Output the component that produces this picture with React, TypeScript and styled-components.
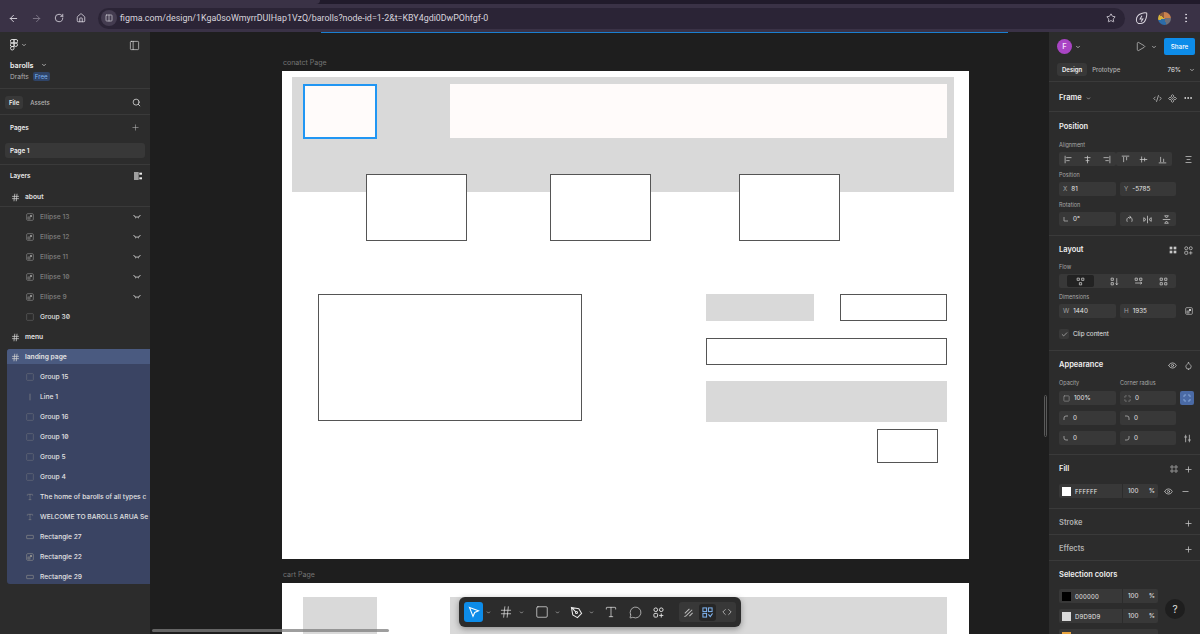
import React from 'react'
import styled, { createGlobalStyle, css } from 'styled-components'
import {
    ArrowLeft, ArrowRight, RotateCw, House, Star, Plus, Search, Hash, Type, Minus, Eye,
    Square, MessageCircle, Code, ChevronDown, Ellipsis, Play, Check, EllipsisVertical, PanelLeft,
    Droplet, Maximize, Columns2, CodeXml,
} from 'lucide-react'

const GlobalStyle = createGlobalStyle`
    html, body {
        margin: 0;
        padding: 0;
        height: 100%;
        overflow: hidden;
        background: #1e1e1e;
    }
    * {
        box-sizing: border-box;
    }
`

const Page = styled.div`
    width: 1200px;
    height: 634px;
    display: flex;
    flex-direction: column;
    overflow: hidden;
    font-family: Inter, "Liberation Sans", sans-serif;
    font-size: 6.3px;
    color: #e6e6e6;
`

/* browser chrome */
const TabStrip = styled.div`
    height: 4px;
    background: #211b2b;
`
const ActiveTab = styled.div`
    width: 320px;
    height: 4px;
    background: #3a3246;
    border-radius: 0 0 4px 0;
`
const Toolbar = styled.div`
    height: 28px;
    display: flex;
    align-items: center;
    background: #3a3246;
    color: #d9d5de;
    padding-left: 8px;
`
const NavGroup = styled.div`
    width: 90px;
    display: flex;
    align-items: center;
    gap: 12px;
`
const UrlPill = styled.div`
    width: 1027px;
    height: 21px;
    display: flex;
    align-items: center;
    padding: 0 9px 0 3px;
    border-radius: 11px;
    background: #2b2436;
    font-family: Roboto, "Liberation Sans", sans-serif;
    font-size: 8.9px;
    color: #d8d4dd;
`
const SiteChip = styled.div`
    width: 16px;
    height: 16px;
    margin-right: 3px;
    display: flex;
    align-items: center;
    justify-content: center;
    border-radius: 50%;
    background: #443c50;
`
const UrlText = styled.span`
    flex: 1;
    margin-top: -1px;
`
const ChromeRight = styled.div`
    flex: 1;
    display: flex;
    align-items: center;
    justify-content: space-between;
    padding: 0 8px 0 10px;
`
const ProfileDot = styled.div`
    width: 13px;
    height: 13px;
    border-radius: 50%;
    background: conic-gradient(#c9814e 0 25%, #6f7078 25% 45%, #2c6ca8 45% 70%, #d6b23c 70% 85%, #8a5a3c 85%);
`

/* editor layout */
const Editor = styled.div`
    flex: 1;
    display: flex;
    min-height: 0;
`
const LeftPanel = styled.aside`
    width: 151px;
    flex-shrink: 0;
    background: #2c2c2c;
    border-right: 1px solid #1e1e1e;
    overflow: hidden;
`
const RightPanel = styled.aside`
    width: 151px;
    flex-shrink: 0;
    background: #2c2c2c;
    overflow: hidden;
`
const Canvas = styled.main`
    position: relative;
    flex: 1;
    background: #1e1e1e;
    overflow: hidden;
`

/* left panel */
const FileHead = styled.div`
    height: 57px;
    padding: 7px 10px 0 10px;
    border-bottom: 1px solid #3a3a3a;
`
const Between = styled.div`
    display: flex;
    align-items: center;
    justify-content: space-between;
`
const Inline = styled.div<{ $gap?: number }>`
    display: flex;
    align-items: center;
    gap: ${(p) => p.$gap ?? 2}px;
`
const FileName = styled.div`
    margin-top: 8px;
    display: flex;
    align-items: center;
    gap: 8px;
    height: 12px;
    font-size: 7.2px;
    font-weight: 600;
    color: #f0f0f0;
`
const Drafts = styled.div`
    margin-top: 1px;
    display: flex;
    align-items: center;
    gap: 4px;
    font-size: 6.6px;
    color: #b0b0b0;
`
const FreeBadge = styled.span`
    padding: 1px 2px;
    border-radius: 2px;
    background: #2f4468;
    color: #7fb4f0;
    line-height: 7px;
    font-size: 6.2px;
`
const TabsRow = styled.div`
    height: 26px;
    padding: 1px 9px 0 5px;
    display: flex;
    align-items: center;
    justify-content: space-between;
    border-bottom: 1px solid #3a3a3a;
`
const LeftTab = styled.span<{ $active?: boolean }>`
    padding: 3px 4px;
    margin-right: 3px;
    border-radius: 3px;
    font-size: 6px;
    font-weight: ${(p) => (p.$active ? 600 : 500)};
    color: ${(p) => (p.$active ? '#f0f0f0' : '#b4b4b4')};
    background: ${(p) => (p.$active ? '#383838' : 'transparent')};
`
const PagesBlock = styled.div`
    height: 50px;
    padding: 7px 5px 0;
    border-bottom: 1px solid #3a3a3a;
`
const BlockHead = styled.div`
    height: 11px;
    padding: 0 5px;
    display: flex;
    align-items: center;
    justify-content: space-between;
    font-weight: 600;
    color: #ededed;
`
const PageRow = styled.div`
    height: 15px;
    margin-top: 10px;
    padding: 0 5px;
    display: flex;
    align-items: center;
    border-radius: 3px;
    background: #383838;
    font-weight: 600;
    color: #f0f0f0;
`
const LayersHead = styled(BlockHead)`
    height: 21px;
    padding: 1px 8px 0 10px;
`
const LayerRow = styled.div<{ $indent: number; $dim?: boolean; $frame?: boolean; $h?: number; $top?: number }>`
    height: ${(p) => p.$h ?? 20}px;
    display: flex;
    align-items: center;
    padding-left: ${(p) => p.$indent}px;
    padding-top: ${(p) => p.$top ?? 0}px;
    white-space: nowrap;
    overflow: hidden;
    font-size: 6.7px;
    font-feature-settings: "zero";
    font-weight: ${(p) => (p.$frame ? 600 : 500)};
    color: ${(p) => (p.$dim ? '#7d7d7d' : '#e2e2e2')};
`
const LayerName = styled.span`
    flex-shrink: 0;
`
const LayerIcon = styled.span<{ $w: number }>`
    width: ${(p) => p.$w}px;
    flex-shrink: 0;
    display: flex;
    align-items: center;
    color: #8c8c8c;
`
const LayerTail = styled.span`
    margin-left: auto;
    margin-right: 9px;
    display: flex;
    color: #d8d8d8;
`
const AboutRule = styled.div`
    height: 1px;
    background: #3a3a3a;
`
const SelectedBlock = styled.div`
    height: 235px;
    margin: 2px 0 0 7px;
    overflow: hidden;
    border-radius: 3px 0 0 3px;
    background: #3a4463;
`
const SelectedHead = styled.div`
    background: #4a5a80;
`
const GapRow = styled.div`
    height: 3px;
`

/* right panel */
const Section = styled.section<{ $h: number; $pad?: number }>`
    height: ${(p) => p.$h}px;
    padding: ${(p) => p.$pad ?? 7}px 7px 0 10px;
    border-bottom: 1px solid #3a3a3a;
`
const HeaderSection = styled(Section)`
    padding-left: 8px;
    padding-right: 5px;
`
const CenterSection = styled(Section)`
    display: flex;
    align-items: center;
    justify-content: space-between;
    padding-top: 3px;
`
const Title = styled.div<{ $muted?: boolean }>`
    height: 12px;
    line-height: 12px;
    font-size: 7.5px;
    font-weight: 600;
    color: ${(p) => (p.$muted ? '#b0b0b0' : '#f0f0f0')};
`
const Mini = styled.div<{ $top?: number }>`
    height: 9px;
    line-height: 9px;
    margin: ${(p) => (p.$top ?? 4) + 1}px 0 2px;
    font-size: 5.5px;
    color: #a8a8a8;
`
const Grid2 = styled.div`
    display: grid;
    grid-template-columns: 57px 56px;
    column-gap: 4px;
    row-gap: 6px;
`
const CornerGrid = styled.div`
    display: grid;
    grid-template-columns: 57px 56px 14px;
    column-gap: 4px;
    row-gap: 6px;
    align-items: center;
`
const LabelGrid = styled(Grid2)`
    margin: 8px 0 3px;
    & > ${Mini} {
        margin: 0;
    }
`
const Field = styled.div`
    height: 14px;
    padding: 0 4px;
    display: flex;
    align-items: center;
    gap: 4px;
    border-radius: 2px;
    background: #383838;
    color: #e6e6e6;
`
const Axis = styled.span`
    color: #a0a0a0;
`
const Seg = styled.div<{ $w: number }>`
    width: ${(p) => p.$w}px;
    height: 14px;
    display: flex;
    align-items: center;
    justify-content: space-around;
    border-radius: 2px;
    background: #383838;
    color: #cfcfcf;
`
const SegFill = styled.span`
    width: 27px;
    height: 12px;
    display: flex;
    align-items: center;
    justify-content: center;
    border-radius: 2px;
    background: #222;
`
const RowLine = styled.div<{ $top?: number }>`
    display: flex;
    align-items: center;
    justify-content: space-between;
    margin-top: ${(p) => p.$top ?? 0}px;
`
const SideIcon = styled.span`
    display: flex;
    margin-left: auto;
    color: #c8c8c8;
`
const IconRow = styled(Inline)`
    color: #c8c8c8;
`
const Avatar = styled.div`
    width: 15px;
    height: 15px;
    display: flex;
    align-items: center;
    justify-content: center;
    border-radius: 50%;
    background: #a945c4;
    color: #f3dff8;
    font-size: 7.5px;
    font-weight: 600;
`
const ShareButton = styled.div`
    width: 31px;
    height: 17px;
    margin-left: 2px;
    display: flex;
    align-items: center;
    justify-content: center;
    border-radius: 2px;
    background: #0d8ce9;
    color: #fff;
    font-weight: 500;
`
const DesignTab = styled.span<{ $active?: boolean }>`
    padding: 3px 5px;
    margin-right: 0;
    border-radius: 3px;
    font-size: 6px;
    font-weight: ${(p) => (p.$active ? 600 : 500)};
    color: ${(p) => (p.$active ? '#f0f0f0' : '#b0b0b0')};
    background: ${(p) => (p.$active ? '#383838' : 'transparent')};
`
const Check14 = styled.span`
    width: 10px;
    height: 10px;
    display: flex;
    align-items: center;
    justify-content: center;
    border-radius: 2px;
    background: #383838;
    color: #d8d8d8;
`
const BlueToggle = styled.span`
    width: 14px;
    height: 14px;
    display: flex;
    align-items: center;
    justify-content: center;
    border-radius: 2px;
    background: #4a6aa5;
    color: #a6c8f5;
`
const GridIcon = styled.span`
    display: flex;
    justify-content: center;
    color: #c8c8c8;
`
const FillRow = styled.div<{ $top: number }>`
    display: flex;
    align-items: center;
    margin-top: ${(p) => p.$top}px;
`
const Swatch = styled.span<{ $c: string }>`
    width: 9px;
    height: 9px;
    flex-shrink: 0;
    background: ${(p) => p.$c};
`
const ColorField = styled(Field)`
    width: 99px;
    padding: 0 3px;
`
const Hex = styled.span`
    flex: 1;
    font-size: 6px;
    letter-spacing: 0.2px;
`
const Percent = styled.span`
    width: 33px;
    height: 14px;
    display: flex;
    align-items: center;
    justify-content: space-between;
    padding-left: 5px;
    border-left: 1px solid #2c2c2c;
`
const HelpBubble = styled.div`
    position: absolute;
    right: 15px;
    bottom: 15px;
    width: 20px;
    height: 20px;
    display: flex;
    align-items: center;
    justify-content: center;
    border-radius: 50%;
    background: #1e1e1e;
    font-size: 10px;
    color: #e0e0e0;
`

/* canvas nodes */
const nodeBox = css<{ $x: number; $y: number; $w: number; $h: number }>`
    position: absolute;
    left: ${(p) => p.$x - 151}px;
    top: ${(p) => p.$y - 32}px;
    width: ${(p) => p.$w}px;
    height: ${(p) => p.$h}px;
`
const Frame = styled.div<{ $x: number; $y: number; $w: number; $h: number }>`
    ${nodeBox}
    background: #fff;
`
const Shape = styled.div<{ $x: number; $y: number; $w: number; $h: number; $kind: 'gray' | 'line' | 'cream' | 'picked' }>`
    ${nodeBox}
    ${(p) => p.$kind === 'gray' && css`background: #d9d9d9;`}
    ${(p) => p.$kind === 'line' && css`background: #fff; border: 1px solid #555;`}
    ${(p) => p.$kind === 'cream' && css`background: #fffbfa;`}
    ${(p) => p.$kind === 'picked' && css`background: #fffbfa; border: 2px solid #2196f3;`}
`
const FrameLabel = styled.span<{ $x: number; $y: number }>`
    position: absolute;
    left: ${(p) => p.$x - 151}px;
    top: ${(p) => p.$y - 32}px;
    color: #757575;
    font-size: 7px;
`
const TopGuide = styled.div`
    position: absolute;
    left: 170px;
    top: 0;
    width: 687px;
    height: 1px;
    background: #1a7fd0;
`
const ScrollH = styled.div`
    position: absolute;
    left: 1px;
    bottom: 2px;
    width: 237px;
    height: 3px;
    border-radius: 2px;
    background: rgba(125, 125, 125, 0.75);
`
const ScrollV = styled.div`
    position: absolute;
    right: 2px;
    top: 363px;
    width: 3px;
    height: 42px;
    border-radius: 2px;
    border: 1px solid #5a5a5a;
    background: #222;
`
const FloatingBar = styled.div`
    position: absolute;
    left: 308px;
    top: 565px;
    width: 282px;
    height: 30px;
    padding: 0 5px;
    display: flex;
    align-items: center;
    border-radius: 6px;
    background: #2c2c2c;
    box-shadow: 0 2px 6px rgba(0, 0, 0, 0.35);
    color: #eaeaea;
`
const ActiveTool = styled.span`
    width: 19px;
    height: 20px;
    display: flex;
    align-items: center;
    justify-content: center;
    border-radius: 3px;
    background: #0d8ce9;
    color: #fff;
`
const Tool = styled.span<{ $w: number }>`
    width: ${(p) => p.$w}px;
    flex-shrink: 0;
    display: flex;
    align-items: center;
    justify-content: center;
    gap: 6px;
`
const ModeGroup = styled.div`
    margin-left: auto;
    width: 57px;
    height: 20px;
    padding: 0 1px;
    display: flex;
    align-items: center;
    justify-content: space-between;
    border-radius: 3px;
    background: #383838;
    color: #bdbdbd;
`
const Mode = styled.span<{ $active?: boolean }>`
    width: 17px;
    height: 17px;
    display: flex;
    align-items: center;
    justify-content: center;
    border-radius: 3px;
    background: ${(p) => (p.$active ? '#262626' : 'transparent')};
    color: ${(p) => (p.$active ? '#7fb4f0' : '#bdbdbd')};
`

/* small drawings */
const Svg = ({ s = 9, children }: { s?: number; children: React.ReactNode }) => (
    <svg width={s} height={s} viewBox="0 0 12 12" fill="none" stroke="currentColor" strokeWidth="1">
        {children}
    </svg>
)
const Caret = ({ s = 6 }: { s?: number }) => <ChevronDown size={s} strokeWidth={2.5} />
const FigmaMark = () => (
    <svg width="8" height="12" viewBox="0 0 8 12" fill="none" stroke="#e8e8e8" strokeWidth="0.9">
        <path d="M4 .5H2a1.75 1.75 0 0 0 0 3.5h2zM4 .5h2a1.75 1.75 0 0 1 0 3.5H4zM4 4H2a1.75 1.75 0 0 0 0 3.5h2zM4 7.5H2A1.75 1.75 0 1 0 4 9.25zM4 5.75a1.75 1.75 0 1 0 3.5 0 1.75 1.75 0 1 0-3.5 0" />
    </svg>
)
const MaskIcon = () => (
    <Svg s={8}>
        <rect x="1" y="1" width="10" height="10" rx="1.5" />
        <rect x="6" y="3" width="3" height="3" fill="currentColor" stroke="none" />
        <rect x="3" y="6" width="3" height="3" />
    </Svg>
)
const GroupIcon = () => (
    <Svg s={8}>
        <rect x="1" y="1" width="10" height="10" rx="1" opacity="0.55" />
    </Svg>
)
const RectIcon = () => (
    <Svg s={8}>
        <rect x="1" y="3.5" width="10" height="5" rx="0.5" />
    </Svg>
)
const LineIcon = () => (
    <Svg s={8}>
        <path d="M6 1v10" />
    </Svg>
)
const LashIcon = () => (
    <Svg s={8}>
        <path d="M1 4c2.500 3 7.500 3 10 0M1 3l1.500 2M11 3L9.500 5M4.300 5.500L3.800 8M7.700 5.500L8.200 8" />
    </Svg>
)
const LayersToggle = () => (
    <svg width="8" height="8" viewBox="0 0 12 12" fill="currentColor">
        <rect x="0" y="0" width="7" height="12" opacity="0.6" />
        <rect x="8" y="1" width="4" height="3" />
        <rect x="8" y="8" width="4" height="3" />
    </svg>
)
const ShapesIcon = ({ s = 9 }: { s?: number }) => (
    <Svg s={s}>
        <circle cx="3" cy="3" r="2" />
        <circle cx="9" cy="3" r="2" />
        <rect x="1" y="7" width="4" height="4" rx="1" />
        <path d="M9 7v4.500M6.800 9.200h4.500" />
    </Svg>
)
const FourDots = ({ s = 9 }: { s?: number }) => (
    <Svg s={s}>
        <circle cx="3" cy="3" r="1.800" />
        <circle cx="9" cy="3" r="1.800" />
        <circle cx="3" cy="9" r="1.800" />
        <circle cx="9" cy="9" r="1.800" />
    </Svg>
)
const ComponentIcon = () => (
    <Svg s={9}>
        <path d="M6 .8L8 2.800 6 4.800 4 2.800zM6 7.200L8 9.200 6 11.200 4 9.200zM2.800 4L4.800 6 2.800 8 .8 6zM9.200 4L11.200 6 9.200 8 7.200 6z" />
    </Svg>
)
const GripSquares = () => (
    <svg width="8" height="8" viewBox="0 0 12 12" fill="currentColor">
        <rect x="1" y="1" width="4" height="4" />
        <rect x="7" y="1" width="4" height="4" />
        <rect x="1" y="7" width="4" height="4" />
        <rect x="7" y="7" width="4" height="4" />
    </svg>
)
const PanelGlyph = ({ d }: { d: string }) => (
    <Svg s={9}>
        <path d={d} />
    </Svg>
)
const CornerGlyph = ({ d }: { d: string }) => (
    <svg width="6" height="6" viewBox="0 0 6 6" fill="none" stroke="#a0a0a0" strokeWidth="0.9">
        <path d={d} />
    </svg>
)
const ExtensionLeaf = () => (
    <svg width="13" height="13" viewBox="0 0 14 14" fill="none" stroke="#d9d5de" strokeWidth="1.1">
        <path d="M7 1.500c3-1 5.500-.5 5.500-.5s.5 2.500-.5 5.500C11 10 8.500 12.500 5.500 12.500A4 4 0 0 1 1.500 8.500C1.500 5 4 2.500 7 1.500z" />
        <path d="M7.500 4L5.500 7.500h3L6.500 10.500" />
    </svg>
)
const PenNib = () => (
    <svg width="13" height="13" viewBox="0 0 14 14" fill="none" stroke="currentColor" strokeWidth="1.1">
        <path d="M1.500 1.500l8 1.500 3 5-4.500 4.500-5-3zM1.500 1.500l5 5" />
        <circle cx="7" cy="7" r="1.100" />
    </svg>
)
const PointerTool = () => (
    <svg width="12" height="12" viewBox="0 0 12 12" fill="none" stroke="currentColor" strokeWidth="1.1">
        <path d="M1.500 1.500l9 3.200-3.800 1.800-1.700 3.900z" />
    </svg>
)
const DrawTool = () => (
    <svg width="11" height="11" viewBox="0 0 12 12" fill="none" stroke="currentColor" strokeWidth="1.1">
        <path d="M2 7l5-5M3.500 9.500L10 3M7 10l3.500-3.500M1.500 10.500l2-1" />
    </svg>
)
const DevTool = () => (
    <svg width="11" height="11" viewBox="0 0 12 12" fill="none" stroke="currentColor" strokeWidth="1.1">
        <rect x="1" y="1" width="4" height="4" />
        <rect x="7" y="1" width="4" height="4" />
        <rect x="1" y="7" width="4" height="4" />
        <path d="M7 8l2 2.500L11.500 7" />
    </svg>
)

const alignGlyphs = [
    'M1.500 1v10M3 3.500h7M3 7.500h4.500',
    'M6 1v10M2 3.500h8M3.500 7.500h5',
    'M10.500 1v10M2 3.500h7M4.500 7.500h4.500',
]
const valignGlyphs = [
    'M1 1.500h10M3.500 2.500v7M7.500 2.500v4.500',
    'M1 6h10M3.500 2v8M7.500 3.500v5',
    'M1 10.500h10M3.500 2.500v7M7.500 5v4.500',
]
const flowGlyphs = [
    'M1.500 1.500h3v3h-3zM7.500 1.500h3v3h-3zM4.500 7.500h3v3h-3z',
    'M1.500 1.500h3v3h-3zM1.500 7.500h3v3h-3zM9 1.500v9M7.500 8.500L9 10.500l1.500-2',
    'M1.500 1.500h3v3h-3zM7.500 1.500h3v3h-3zM1.500 8h9M8.500 6.500l2 1.500-2 1.500',
    'M1.500 1.500h3v3h-3zM7.500 1.500h3v3h-3zM1.500 7.500h3v3h-3zM7.500 7.500h3v3h-3z',
]

const hiddenLayers = ['Ellipse 13', 'Ellipse 12', 'Ellipse 11', 'Ellipse 10', 'Ellipse 9']

type LayerKind = 'group' | 'line' | 'text' | 'rect' | 'mask'
const selectedLayers: { name: string; kind: LayerKind }[] = [
    { name: 'Group 15', kind: 'group' },
    { name: 'Line 1', kind: 'line' },
    { name: 'Group 16', kind: 'group' },
    { name: 'Group 10', kind: 'group' },
    { name: 'Group 5', kind: 'group' },
    { name: 'Group 4', kind: 'group' },
    { name: 'The home of barolls of all types c', kind: 'text' },
    { name: 'WELCOME TO BAROLLS ARUA Se', kind: 'text' },
    { name: 'Rectangle 27', kind: 'rect' },
    { name: 'Rectangle 22', kind: 'mask' },
    { name: 'Rectangle 29', kind: 'rect' },
]

const kindIcon = (kind: LayerKind) => {
    if (kind === 'group') return <GroupIcon />
    if (kind === 'line') return <LineIcon />
    if (kind === 'text') return <Type size={8} strokeWidth={1.5} />
    if (kind === 'rect') return <RectIcon />
    return <MaskIcon />
}

const frames = [
    { x: 282, y: 71, w: 687, h: 488 },
    { x: 282, y: 583, w: 687, h: 60 },
]
const shapes: { x: number; y: number; w: number; h: number; kind: 'gray' | 'line' | 'cream' | 'picked' }[] = [
    { x: 292, y: 77, w: 662, h: 115, kind: 'gray' },
    { x: 303, y: 84, w: 74, h: 55, kind: 'picked' },
    { x: 450, y: 84, w: 497, h: 54, kind: 'cream' },
    { x: 366, y: 174, w: 101, h: 67, kind: 'line' },
    { x: 550, y: 174, w: 101, h: 67, kind: 'line' },
    { x: 739, y: 174, w: 101, h: 67, kind: 'line' },
    { x: 318, y: 294, w: 264, h: 127, kind: 'line' },
    { x: 706, y: 294, w: 108, h: 27, kind: 'gray' },
    { x: 840, y: 294, w: 107, h: 27, kind: 'line' },
    { x: 706, y: 338, w: 241, h: 27, kind: 'line' },
    { x: 706, y: 381, w: 241, h: 41, kind: 'gray' },
    { x: 877, y: 429, w: 61, h: 34, kind: 'line' },
    { x: 303, y: 597, w: 74, h: 50, kind: 'gray' },
    { x: 450, y: 597, w: 497, h: 50, kind: 'gray' },
]

const App = () => {
    return (
        <Page>
            <GlobalStyle />
            <TabStrip>
                <ActiveTab />
            </TabStrip>
            <Toolbar>
                <NavGroup>
                    <ArrowLeft size={11} />
                    <ArrowRight size={11} color="#7f7889" />
                    <RotateCw size={10} />
                    <House size={10} />
                </NavGroup>
                <UrlPill>
                    <SiteChip>
                        <Columns2 size={8} />
                    </SiteChip>
                    <UrlText>figma.com/design/1Kga0soWmyrrDUIHap1VzQ/barolls?node-id=1-2&amp;t=KBY4gdi0DwPOhfgf-0</UrlText>
                    <Star size={10} />
                </UrlPill>
                <ChromeRight>
                    <ExtensionLeaf />
                    <ProfileDot />
                    <EllipsisVertical size={12} />
                </ChromeRight>
            </Toolbar>
            <Editor>
                <LeftPanel>
                    <FileHead>
                        <Between>
                            <Inline $gap={3}>
                                <FigmaMark />
                                <Caret />
                            </Inline>
                            <PanelLeft size={11} strokeWidth={1.4} />
                        </Between>
                        <FileName>
                            barolls
                            <Caret />
                        </FileName>
                        <Drafts>
                            Drafts
                            <FreeBadge>Free</FreeBadge>
                        </Drafts>
                    </FileHead>
                    <TabsRow>
                        <Inline $gap={0}>
                            <LeftTab $active>File</LeftTab>
                            <LeftTab>Assets</LeftTab>
                        </Inline>
                        <Search size={9} />
                    </TabsRow>
                    <PagesBlock>
                        <BlockHead>
                            Pages
                            <Plus size={9} strokeWidth={1.4} color="#bdbdbd" />
                        </BlockHead>
                        <PageRow>Page 1</PageRow>
                    </PagesBlock>
                    <LayersHead>
                        Layers
                        <LayersToggle />
                    </LayersHead>
                    <LayerRow $indent={11} $frame $top={2}>
                        <LayerIcon $w={14}>
                            <Hash size={9} color="#d0d0d0" />
                        </LayerIcon>
                        about
                    </LayerRow>
                    <AboutRule />
                    {hiddenLayers.map((name) => (
                        <LayerRow key={name} $indent={26} $dim>
                            <LayerIcon $w={14}>
                                <MaskIcon />
                            </LayerIcon>
                            {name}
                            <LayerTail>
                                <LashIcon />
                            </LayerTail>
                        </LayerRow>
                    ))}
                    <LayerRow $indent={26}>
                        <LayerIcon $w={14}>
                            <GroupIcon />
                        </LayerIcon>
                        Group 30
                    </LayerRow>
                    <LayerRow $indent={11} $frame>
                        <LayerIcon $w={14}>
                            <Hash size={9} color="#d0d0d0" />
                        </LayerIcon>
                        menu
                    </LayerRow>
                    <SelectedBlock>
                        <SelectedHead>
                            <LayerRow $indent={4} $frame $h={15} $top={1}>
                                <LayerIcon $w={14}>
                                    <Hash size={9} color="#d0d0d0" />
                                </LayerIcon>
                                landing page
                            </LayerRow>
                        </SelectedHead>
                        <GapRow />
                        {selectedLayers.map((layer) => (
                            <LayerRow key={layer.name} $indent={19}>
                                <LayerIcon $w={14}>{kindIcon(layer.kind)}</LayerIcon>
                                <LayerName>{layer.name}</LayerName>
                            </LayerRow>
                        ))}
                    </SelectedBlock>
                </LeftPanel>
                <Canvas>
                    <TopGuide />
                    <FrameLabel $x={283} $y={58}>conatct Page</FrameLabel>
                    <FrameLabel $x={283} $y={570}>cart Page</FrameLabel>
                    {frames.map((f) => (
                        <Frame key={f.y} $x={f.x} $y={f.y} $w={f.w} $h={f.h} />
                    ))}
                    {shapes.map((s) => (
                        <Shape key={`${s.x}-${s.y}`} $x={s.x} $y={s.y} $w={s.w} $h={s.h} $kind={s.kind} />
                    ))}
                    <FloatingBar>
                        <ActiveTool>
                            <PointerTool />
                        </ActiveTool>
                        <Tool $w={10}>
                            <Caret s={5} />
                        </Tool>
                        <Tool $w={37}>
                            <Hash size={14} strokeWidth={1.2} />
                            <Caret s={5} />
                        </Tool>
                        <Tool $w={34}>
                            <Square size={14} strokeWidth={1.2} />
                            <Caret s={5} />
                        </Tool>
                        <Tool $w={35}>
                            <PenNib />
                            <Caret s={5} />
                        </Tool>
                        <Tool $w={24}>
                            <Type size={14} strokeWidth={1.2} />
                        </Tool>
                        <Tool $w={24}>
                            <MessageCircle size={13} strokeWidth={1.2} />
                        </Tool>
                        <Tool $w={22}>
                            <ShapesIcon s={11} />
                        </Tool>
                        <ModeGroup>
                            <Mode>
                                <DrawTool />
                            </Mode>
                            <Mode $active>
                                <DevTool />
                            </Mode>
                            <Mode>
                                <Code size={10} />
                            </Mode>
                        </ModeGroup>
                    </FloatingBar>
                    <ScrollH />
                    <ScrollV />
                </Canvas>
                <RightPanel>
                    <HeaderSection $h={50} $pad={6}>
                        <RowLine>
                            <Inline $gap={3}>
                                <Avatar>F</Avatar>
                                <Caret />
                            </Inline>
                            <Inline $gap={5}>
                                <Play size={11} strokeWidth={1.3} />
                                <Caret />
                                <ShareButton>Share</ShareButton>
                            </Inline>
                        </RowLine>
                        <RowLine $top={8}>
                            <Inline $gap={0}>
                                <DesignTab $active>Design</DesignTab>
                                <DesignTab>Prototype</DesignTab>
                            </Inline>
                            <Inline $gap={8}>
                                <span>76%</span>
                                <Caret />
                            </Inline>
                        </RowLine>
                    </HeaderSection>
                    <CenterSection $h={30}>
                        <Inline $gap={4}>
                            <Title>Frame</Title>
                            <Caret s={5} />
                        </Inline>
                        <IconRow $gap={6}>
                            <CodeXml size={9} />
                            <ComponentIcon />
                            <Ellipsis size={10} color="#f0f0f0" />
                        </IconRow>
                    </CenterSection>
                    <Section $h={124} $pad={9}>
                        <Title>Position</Title>
                        <Mini $top={7}>Alignment</Mini>
                        <RowLine>
                            <Seg $w={57}>
                                {alignGlyphs.map((d) => (
                                    <PanelGlyph key={d} d={d} />
                                ))}
                            </Seg>
                            <Seg $w={56}>
                                {valignGlyphs.map((d) => (
                                    <PanelGlyph key={d} d={d} />
                                ))}
                            </Seg>
                            <SideIcon>
                                <PanelGlyph d="M2 2h8M2 10h8M3.500 6h5" />
                            </SideIcon>
                        </RowLine>
                        <Mini>Position</Mini>
                        <Grid2>
                            <Field>
                                <Axis>X</Axis> 81
                            </Field>
                            <Field>
                                <Axis>Y</Axis> -5785
                            </Field>
                        </Grid2>
                        <Mini>Rotation</Mini>
                        <Grid2>
                            <Field>
                                <CornerGlyph d="M1 1v4h4" />
                                0°
                            </Field>
                            <Seg $w={56}>
                                <PanelGlyph d="M3 9c-1.500-3 0-6 3-6s4.500 3 3 6M6 1L8 3 6 5" />
                                <PanelGlyph d="M6 1v10M1 3.500l3 2.500-3 2.500zM11 3.500L8 6l3 2.500z" />
                                <PanelGlyph d="M1 6h10M3.500 1L6 4l2.500-3zM3.500 11L6 8l2.500 3z" />
                            </Seg>
                        </Grid2>
                    </Section>
                    <Section $h={115} $pad={8}>
                        <RowLine>
                            <Title>Layout</Title>
                            <IconRow $gap={7}>
                                <GripSquares />
                                <ShapesIcon />
                            </IconRow>
                        </RowLine>
                        <Mini $top={6}>Flow</Mini>
                        <Seg $w={117}>
                            <SegFill>
                                <PanelGlyph d={flowGlyphs[0]} />
                            </SegFill>
                            <PanelGlyph d={flowGlyphs[1]} />
                            <PanelGlyph d={flowGlyphs[2]} />
                            <PanelGlyph d={flowGlyphs[3]} />
                        </Seg>
                        <Mini>Dimensions</Mini>
                        <RowLine>
                            <Grid2>
                                <Field>
                                    <Axis>W</Axis> 1440
                                </Field>
                                <Field>
                                    <Axis>H</Axis> 1935
                                </Field>
                            </Grid2>
                            <SideIcon>
                                <MaskIcon />
                            </SideIcon>
                        </RowLine>
                        <RowLine $top={11}>
                            <Inline $gap={4}>
                                <Check14>
                                    <Check size={7} />
                                </Check14>
                                <span>Clip content</span>
                            </Inline>
                        </RowLine>
                    </Section>
                    <Section $h={104} $pad={8}>
                        <RowLine>
                            <Title>Appearance</Title>
                            <IconRow $gap={7}>
                                <Eye size={9} />
                                <Droplet size={9} />
                            </IconRow>
                        </RowLine>
                        <LabelGrid>
                            <Mini>Opacity</Mini>
                            <Mini>Corner radius</Mini>
                        </LabelGrid>
                        <CornerGrid>
                            <Field>
                                <Square size={7} color="#a0a0a0" />
                                100%
                            </Field>
                            <Field>
                                <Maximize size={7} color="#a0a0a0" />0
                            </Field>
                            <BlueToggle>
                                <Maximize size={8} />
                            </BlueToggle>
                            <Field>
                                <CornerGlyph d="M1 5V3a2 2 0 0 1 2-2h2" />0
                            </Field>
                            <Field>
                                <CornerGlyph d="M1 1h2a2 2 0 0 1 2 2v2" />0
                            </Field>
                            <span />
                            <Field>
                                <CornerGlyph d="M1 1v2a2 2 0 0 0 2 2h2" />0
                            </Field>
                            <Field>
                                <CornerGlyph d="M5 1v2a2 2 0 0 1-2 2H1" />0
                            </Field>
                            <GridIcon>
                                <PanelGlyph d="M3.500 1v10M8.500 1v10M1.500 4h4M6.500 8h4" />
                            </GridIcon>
                        </CornerGrid>
                    </Section>
                    <Section $h={54} $pad={8}>
                        <RowLine>
                            <Title>Fill</Title>
                            <IconRow $gap={6}>
                                <FourDots s={8} />
                                <Plus size={9} />
                            </IconRow>
                        </RowLine>
                        <FillRow $top={9}>
                            <ColorField>
                                <Swatch $c="#fff" />
                                <Hex>FFFFFF</Hex>
                                <Percent>100 <span>%</span></Percent>
                            </ColorField>
                            <IconRow $gap={8} style={{ marginLeft: 6 }}>
                                <Eye size={9} />
                                <Minus size={9} />
                            </IconRow>
                        </FillRow>
                    </Section>
                    <CenterSection $h={26}>
                        <Title $muted>Stroke</Title>
                        <IconRow>
                            <Plus size={9} />
                        </IconRow>
                    </CenterSection>
                    <CenterSection $h={26}>
                        <Title $muted>Effects</Title>
                        <IconRow>
                            <Plus size={9} />
                        </IconRow>
                    </CenterSection>
                    <Section $h={80} $pad={8}>
                        <Title>Selection colors</Title>
                        <FillRow $top={8}>
                            <ColorField>
                                <Swatch $c="#000" />
                                <Hex>000000</Hex>
                                <Percent>100 <span>%</span></Percent>
                            </ColorField>
                        </FillRow>
                        <FillRow $top={6}>
                            <ColorField>
                                <Swatch $c="#d9d9d9" />
                                <Hex>D9D9D9</Hex>
                                <Percent>100 <span>%</span></Percent>
                            </ColorField>
                        </FillRow>
                        <FillRow $top={6}>
                            <ColorField>
                                <Swatch $c="#e8a33d" />
                            </ColorField>
                        </FillRow>
                    </Section>
                    <HelpBubble>?</HelpBubble>
                </RightPanel>
            </Editor>
        </Page>
    )
}

export default App
